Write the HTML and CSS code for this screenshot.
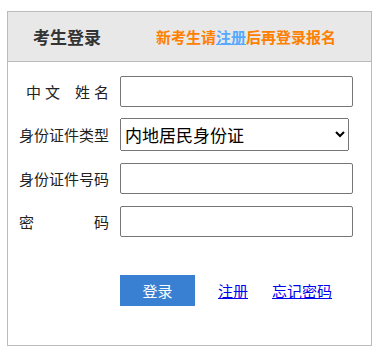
FILE: index.html
```html
<!DOCTYPE html>
<html lang="zh-CN">
	<head>
		<meta charset="UTF-8" />
		<meta name="viewport" content="width=device-width, initial-scale=1.0" />
		<title>考生登录</title>
		<link rel="stylesheet" href="styles.css">
	</head>
	<body>
		<div class="login-box">
			<!-- 標題列 -->
			<div class="login-head">
				<span class="login-head__title">考生登录</span>
				<span class="login-head__tip">新考生请<a href="#">注册</a>后再登录报名</span>
			</div>

			<!-- 表單 -->
			<form class="login-form">
				<div class="form-row">
					<label class="form-label form-label--name"><span>中文</span><span>姓名</span></label>
					<input type="text" class="form-input">
				</div>
				<div class="form-row form-row--select">
					<label class="form-label">身份证件类型</label>
					<select class="form-select">
						<option>内地居民身份证</option>
						<option>港澳居民来往内地通行证</option>
						<option>台湾居民来往大陆通行证</option>
						<option>护照</option>
					</select>
				</div>
				<div class="form-row">
					<label class="form-label">身份证件号码</label>
					<input type="text" class="form-input">
				</div>
				<div class="form-row">
					<label class="form-label form-label--pwd"><span>密</span><span>码</span></label>
					<input type="password" class="form-input">
				</div>

				<div class="form-actions">
					<button type="button" class="btn-login">登录</button>
					<a href="#" class="form-link">注册</a>
					<a href="#" class="form-link">忘记密码</a>
				</div>
			</form>
		</div>
	</body>
</html>
```

FILE: styles.css
```css
body {
	margin: 0;
	padding: 11px 0 0 7px;
	background-color: #fff;
	font-family: "Noto Sans CJK SC", "Liberation Sans", sans-serif;
}

.login-box {
	width: 363px;
	height: 333px;
	border: 1px solid #bbb;
}

.login-head {
	display: flex;
	align-items: center;
	height: 49px;
	padding-left: 25px;
	background-color: #e8e8e8;
	border-bottom: 1px solid #bbb;
}

.login-head__title {
	font-size: 17px;
	font-weight: bold;
	color: #333;
	width: 123px;
}

.login-head__tip {
	font-size: 15px;
	font-weight: bold;
	color: #ff8000;
}

.login-head__tip a {
	color: #55aaff;
}

/* 表單樣式 */
.login-form {
	padding: 14px 0 0 11px;
}

.form-row {
	display: flex;
	align-items: center;
	margin-bottom: 12px;
}

.form-row--select {
	margin-top: -1px;
}

.form-label {
	width: 90px;
	margin-right: 11px;
	font-size: 15px;
	color: #222;
	white-space: nowrap;
}

.form-label--name {
	display: flex;
	justify-content: space-between;
	box-sizing: border-box;
	padding-left: 7px;
	letter-spacing: 4px;
	margin-right: 7px;
	width: 94px;
}

.form-label--pwd {
	display: flex;
	justify-content: space-between;
}

.form-input {
	box-sizing: border-box;
	width: 233px;
	height: 31px;
	margin: 0;
	border: 1px solid #767676;
	border-radius: 2px;
	font-size: 15px;
}

.form-select {
	box-sizing: border-box;
	width: 229px;
	height: 33px;
	margin: 0;
	font-size: 17px;
	font-family: "Noto Sans CJK SC", sans-serif;
	color: #000;
}

.form-actions {
	display: flex;
	align-items: center;
	margin-top: 38px;
	padding-left: 101px;
}

.btn-login {
	width: 75px;
	height: 31px;
	margin-right: 23px;
	border: none;
	background-color: #3a80d2;
	color: #fff;
	font-size: 15px;
	font-family: "Noto Sans CJK SC", sans-serif;
	cursor: pointer;
}

.form-link {
	margin-right: 24px;
	font-size: 15px;
	color: #0000ee;
}
```
